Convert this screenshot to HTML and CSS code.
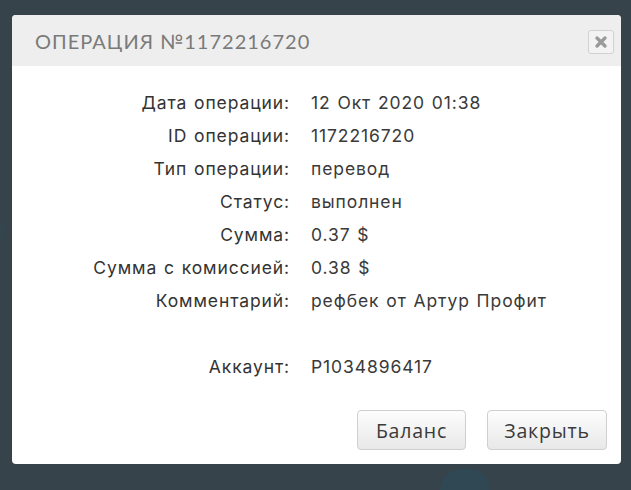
FILE: index.html
```html
<!DOCTYPE html>
<html lang="ru">
<head>
<meta charset="utf-8">
<title>Операция</title>
<link rel="stylesheet" href="styles.css">
</head>
<body>
<div class="bg-circle bg-circle-bottom"></div>
<div class="bg-circle bg-circle-left"></div>
<div class="modal">
  <div class="modal-header">
    <h2 class="modal-title">Операция №1172216720</h2>
    <button class="close-btn" aria-label="Закрыть">
      <svg width="14" height="14" viewBox="0 0 14 14"><path d="M3 3 L11 11 M11 3 L3 11" stroke="#9a9a9a" stroke-width="3.4" stroke-linecap="round"/></svg>
    </button>
  </div>
  <div class="modal-body">
    <dl class="details">
      <dt>Дата операции:</dt><dd>12 Окт 2020 01:38</dd>
      <dt>ID операции:</dt><dd>1172216720</dd>
      <dt>Тип операции:</dt><dd>перевод</dd>
      <dt>Статус:</dt><dd>выполнен</dd>
      <dt>Сумма:</dt><dd>0.37 $</dd>
      <dt>Сумма с комиссией:</dt><dd>0.38 $</dd>
      <dt>Комментарий:</dt><dd>рефбек от Артур Профит</dd>
      <dt class="spacer"></dt><dd class="spacer"></dd>
      <dt>Аккаунт:</dt><dd>P1034896417</dd>
    </dl>
    <div class="actions">
      <button class="btn">Баланс</button>
      <button class="btn btn-wide">Закрыть</button>
    </div>
  </div>
</div>
</body>
</html>
```
FILE: styles.css
```css
html, body {
  margin: 0;
  padding: 0;
}
body {
  background: #37434b;
  width: 631px;
  height: 490px;
  overflow: hidden;
  position: relative;
  padding-top: 15px;
  box-sizing: border-box;
}
.bg-circle {
  position: absolute;
  background: #2f4853;
}
.bg-circle-bottom {
  left: 440px;
  top: 469px;
  width: 50px;
  height: 21px;
  border-radius: 25px 25px 0 0;
}
.bg-circle-left {
  left: 0;
  top: 222px;
  width: 6px;
  height: 18px;
  border-radius: 0 9px 9px 0;
  background: #34454e;
}
.modal {
  position: relative;
  margin-left: 12px;
  width: 609px;
  height: 449px;
  background: #fff;
  border-radius: 4px;
  overflow: hidden;
  display: flex;
  flex-direction: column;
}
.modal-header {
  height: 51px;
  background: #eeeeee;
  display: flex;
  align-items: center;
  justify-content: space-between;
  padding: 0 7px 0 23px;
  flex-shrink: 0;
}
.modal-title {
  margin: 0;
  font-family: "Lato", "DejaVu Sans", sans-serif;
  font-weight: 400;
  font-size: 20px;
  letter-spacing: 1px;
  text-transform: uppercase;
  color: #7a7a7a;
}
.close-btn {
  width: 26px;
  height: 24px;
  padding: 0;
  margin-top: 3px;
  border: 1px solid #d2d2d2;
  border-radius: 3px;
  background: #f3f3f3;
  display: flex;
  align-items: center;
  justify-content: center;
}
.modal-body {
  flex: 1;
  display: flex;
  flex-direction: column;
  padding: 20px 14px 14px 14px;
}
.details {
  margin: 0;
  display: grid;
  grid-template-columns: 264px auto;
  column-gap: 21px;
  grid-auto-rows: 33px;
  align-items: center;
  font-family: "Inter", "Open Sans", sans-serif;
  font-size: 17.5px;
  letter-spacing: 0.9px;
  word-spacing: 1px;
  color: #333;
}
.details dt {
  text-align: right;
  white-space: nowrap;
}
.details dd {
  margin: 0;
  color: #3a3a3a;
  white-space: nowrap;
}
.actions {
  margin-top: auto;
  display: flex;
  justify-content: flex-end;
  gap: 21px;
}
.btn {
  width: 109px;
  height: 40px;
  border: 1px solid #cfcfcf;
  border-radius: 4px;
  background: linear-gradient(#fdfdfd, #e8e8e8);
  font-family: "Open Sans", sans-serif;
  font-size: 19.5px;
  letter-spacing: 0.8px;
  color: #3a3a3a;
  padding: 0;
}
.btn-wide {
  width: 120px;
}
```
